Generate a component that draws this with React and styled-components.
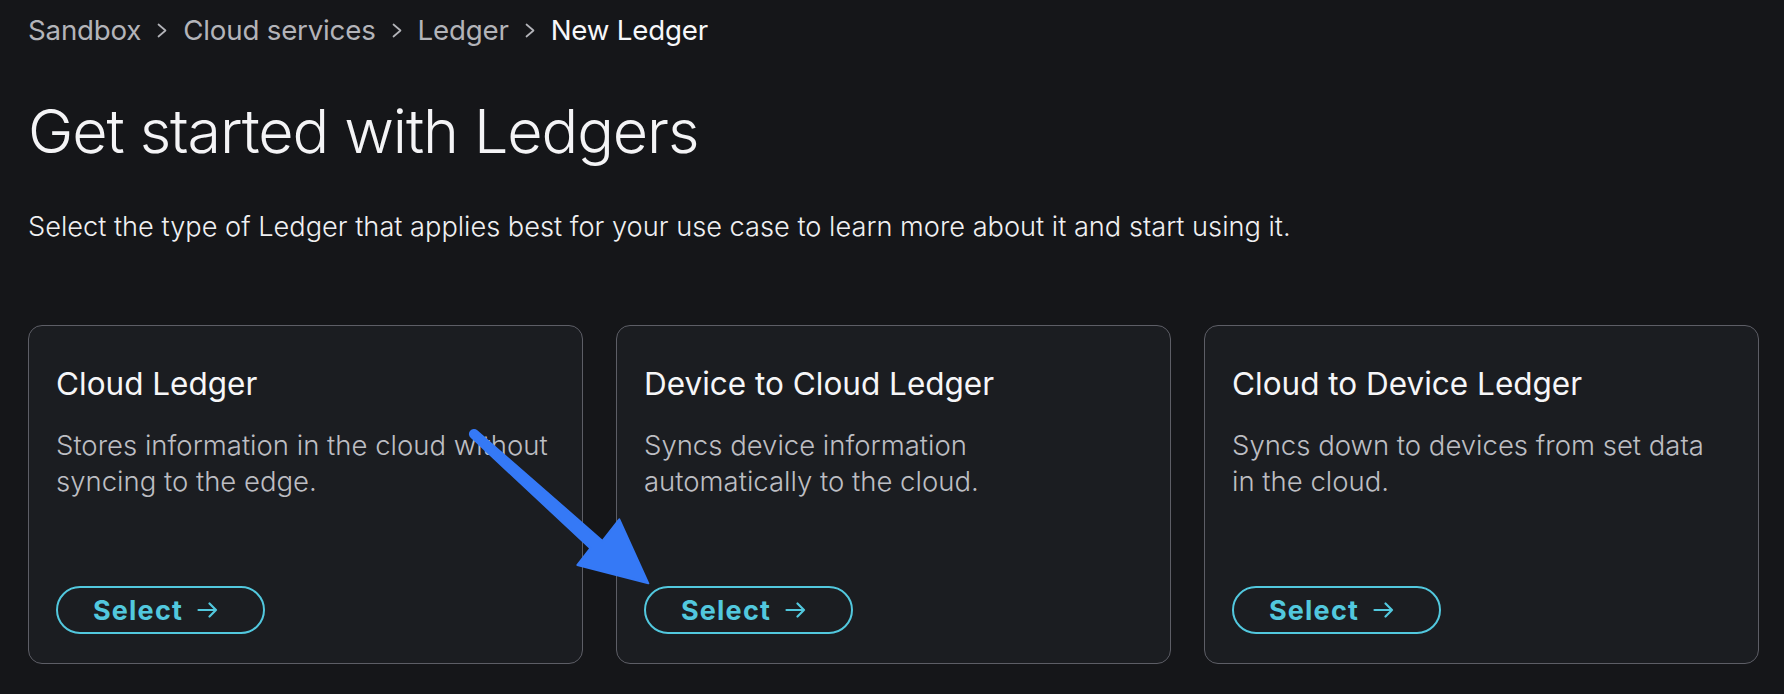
import React from 'react';
import styled, { createGlobalStyle } from 'styled-components';

const GlobalStyle = createGlobalStyle`
  html, body {
    margin: 0;
    padding: 0;
    background: #151619;
  }
  body {
    font-family: Inter, "Noto Sans", "Liberation Sans", sans-serif;
    color: #f4f4f6;
    -webkit-font-smoothing: antialiased;
  }
`;

const ledgers = [
  {
    id: 'cloud',
    title: 'Cloud Ledger',
    desc: 'Stores information in the cloud without syncing to the edge.',
  },
  {
    id: 'device-to-cloud',
    title: 'Device to Cloud Ledger',
    desc: 'Syncs device information automatically to the cloud.',
  },
  {
    id: 'cloud-to-device',
    title: 'Cloud to Device Ledger',
    desc: 'Syncs down to devices from set data in the cloud.',
  },
];

const crumbs = ['Sandbox', 'Cloud services', 'Ledger', 'New Ledger'];

const Chevron = () => (
  <svg width='10' height='15' viewBox='0 0 10 15' fill='none'>
    <polyline
      points='1.5,1.5 8.5,7.5 1.5,13.5'
      stroke='#b3b4b9'
      strokeWidth='1.7'
      strokeLinecap='round'
      strokeLinejoin='round'
    />
  </svg>
);

const ArrowRight = () => (
  <svg width='21' height='16' viewBox='0 0 21 16' fill='none'>
    <path
      d='M1.5 8H19M12.5 1.5L19 8L12.5 14.5'
      stroke='#52c8de'
      strokeWidth='2.2'
      strokeLinecap='round'
      strokeLinejoin='round'
    />
  </svg>
);

// annotation arrow drawn on top of the screenshot
const Annotation = () => (
  <Overlay width='1784' height='694' viewBox='0 0 1784 694'>
    <path
      d='M476.7 430.9 L602.5 540.9 L619.3 519.3 L648.3 583.3 L577.3 565 L590.3 548.3 L471.3 437.1 A4 4 0 0 1 476.7 430.9 Z'
      fill='#3579f6'
      stroke='#3579f6'
      strokeWidth='2'
      strokeLinejoin='round'
    />
  </Overlay>
);

const App = () => {
  return (
    <Page>
      <GlobalStyle />
      <Breadcrumbs>
        {crumbs.map((c, i) => (
          <React.Fragment key={c}>
            {i > 0 && <Chevron />}
            <Crumb current={i === crumbs.length - 1}>{c}</Crumb>
          </React.Fragment>
        ))}
      </Breadcrumbs>
      <Heading>Get started with Ledgers</Heading>
      <Intro>
        Select the type of Ledger that applies best for your use case to learn
        more about it and start using it.
      </Intro>
      <CardGrid>
        {ledgers.map((l) => (
          <Card key={l.id}>
            <CardTitle>{l.title}</CardTitle>
            <CardDesc>{l.desc}</CardDesc>
            <SelectButton>
              Select
              <ArrowRight />
            </SelectButton>
          </Card>
        ))}
      </CardGrid>
      <Annotation />
    </Page>
  );
};

export default App;

// STYLED CSS

const Page = styled.div`
  position: relative;
  width: 1784px;
  height: 694px;
  box-sizing: border-box;
  padding: 14px 25px 0 28px;
  overflow: hidden;
`;

const Breadcrumbs = styled.nav`
  display: flex;
  align-items: center;
  gap: 16px;
  height: 32px;
`;

const Crumb = styled.span`
  font-size: 27.7px;
  line-height: 32px;
  font-weight: 400;
  letter-spacing: -0.2px;
  color: ${(p) => (p.current ? '#f7f7f9' : '#b3b4b9')};
`;

const Heading = styled.h1`
  margin: 47px 0 0;
  font-size: 61px;
  line-height: 76px;
  font-weight: 300;
  letter-spacing: -1.1px;
  color: #f4f4f6;
`;

const Intro = styled.p`
  margin: 42px 0 0;
  font-size: 27.2px;
  line-height: 32px;
  font-weight: 300;
  color: #f0f0f2;
`;

const CardGrid = styled.div`
  display: grid;
  grid-template-columns: repeat(3, 1fr);
  gap: 33px;
  margin-top: 82px;
`;

const Card = styled.div`
  display: flex;
  flex-direction: column;
  align-items: flex-start;
  box-sizing: border-box;
  height: 339px;
  padding: 40px 27px 29px;
  background: #1b1d21;
  border: 1px solid #5d5e66;
  border-radius: 14px;
`;

const CardTitle = styled.h3`
  margin: 0;
  font-size: 31.5px;
  line-height: 36px;
  font-weight: 400;
  color: #f6f6f8;
`;

const CardDesc = styled.p`
  margin: 25px 0 0;
  max-width: 496px;
  font-size: 27.5px;
  line-height: 36px;
  font-weight: 300;
  color: #bdbec3;
`;

const SelectButton = styled.button`
  margin-top: auto;
  display: flex;
  align-items: center;
  justify-content: center;
  gap: 14px;
  box-sizing: border-box;
  width: 209px;
  height: 48px;
  padding: 0 10px 0 0;
  background: transparent;
  border: 2px solid #52c8de;
  border-radius: 24px;
  color: #52c8de;
  font-family: Inter, "Noto Sans", sans-serif;
  font-size: 27px;
  font-weight: 700;
  letter-spacing: 1.2px;
  cursor: pointer;
`;

const Overlay = styled.svg`
  position: absolute;
  top: 0;
  left: 0;
  pointer-events: none;
`;
